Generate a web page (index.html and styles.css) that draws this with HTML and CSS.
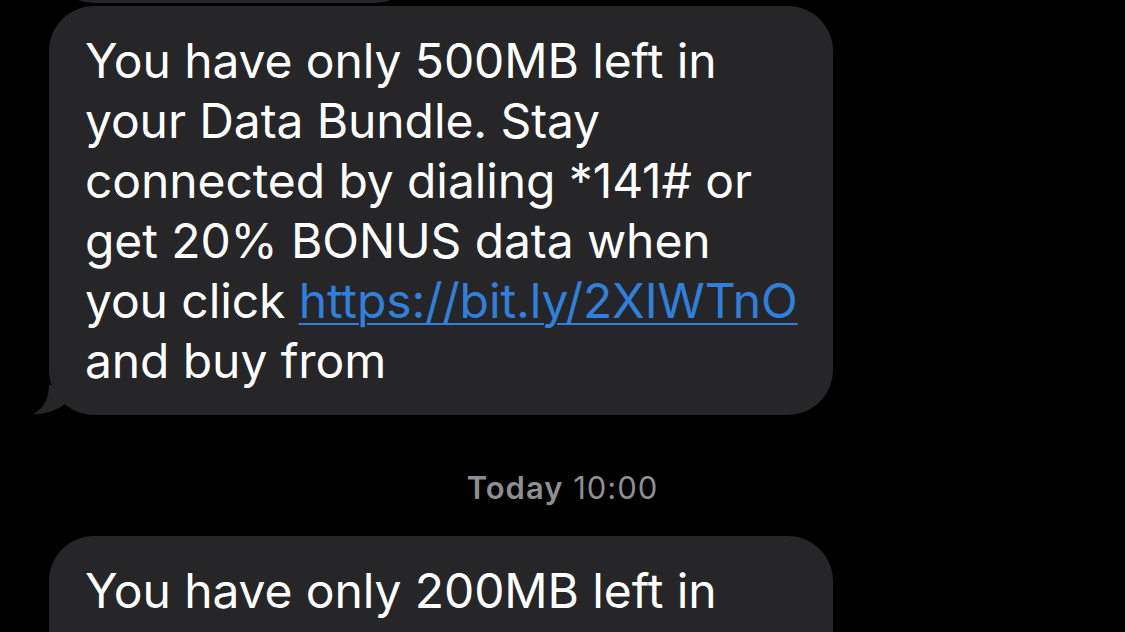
FILE: index.html
```html
<!DOCTYPE html>
<html lang="en">
<head>
    <meta charset="UTF-8">
    <meta name="viewport" content="width=device-width, initial-scale=1.0">
    <title>Messages</title>
    <link rel="stylesheet" href="styles.css">
</head>
<body>
    <div class="thread">
        <div class="bubble earlier"></div>

        <div class="bubble last">
            <p>You have only 500MB left in<br>
            your Data Bundle. Stay<br>
            connected by dialing *141# or<br>
            get 20% BONUS data when<br>
            you click <a href="#">https://bit.ly/2XIWTnO</a><br>
            and buy from</p>
            <svg class="tail" width="70" height="30" viewBox="0 0 70 30">
                <path d="M19 0 C19 15 12 25 3 29 C15 30 27 25 35 19 C45 27 58 30 70 30 L70 0 Z" fill="#262629"/>
            </svg>
        </div>

        <div class="stamp"><b>Today</b> 10:00</div>

        <div class="bubble">
            <p>You have only 200MB left in<br>
            your Data Bundle. Stay</p>
        </div>
    </div>
</body>
</html>
```

FILE: styles.css
```css
body {
    margin: 0;
    background-color: #000;
    font-family: Inter, "Noto Sans", sans-serif;
    overflow: hidden;
    height: 632px;
}

.thread {
    padding: 0 49px;
    display: flex;
    flex-direction: column;
    align-items: flex-start;
}

.bubble {
    position: relative;
    background-color: #262629;
    border-radius: 45px;
    width: 784px;
    box-sizing: border-box;
    padding: 25px 30px 24px 36px;
    color: #fff;
}

.bubble.earlier {
    width: 371px;
    height: 100px;
    margin-top: -97px;
    margin-bottom: 3px;
    padding: 0;
}

.bubble p {
    margin: 0;
    font-size: 48px;
    line-height: 60px;
    letter-spacing: -0.1px;
    white-space: nowrap;
}

.bubble a {
    color: #2f80dc;
    text-decoration: underline;
    text-decoration-thickness: 2px;
    text-underline-offset: 5px;
}

.tail {
    position: absolute;
    left: -19px;
    bottom: 0;
}

.stamp {
    align-self: center;
    margin: 53px 0 28px;
    color: #8e8e93;
    font-size: 31px;
    line-height: 40px;
    letter-spacing: 1px;
}

.stamp b {
    font-weight: 600;
}
```
